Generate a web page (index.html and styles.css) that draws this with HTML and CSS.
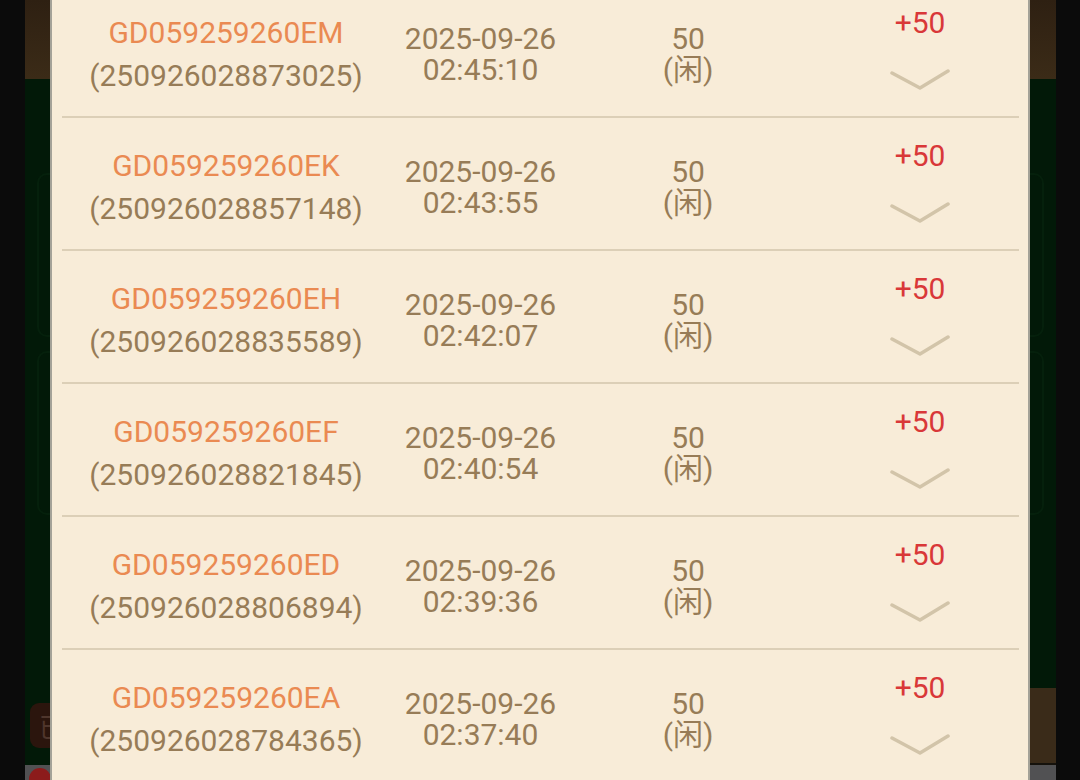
FILE: index.html
```html
<!DOCTYPE html>
<html lang="zh">
<head>
<meta charset="utf-8">
<title>注单记录</title>
<link rel="stylesheet" href="styles.css">
</head>
<body>
<div class="app">
  <header class="topbar"></header>
  <main class="table-area">
    <div class="ghost-card"></div>
    <div class="ghost-card"></div>
  </main>
  <div class="bottom">
    <div class="bottom-left"><span class="badge">已</span></div>
    <div class="bottom-right"></div>
  </div>
  <footer class="navbar"><span class="red-dot"></span></footer>
</div>

<div class="modal">
  <div class="list">
    <div class="row">
      <div class="col-id"><div class="code">GD059259260EM</div><div class="serial">(250926028873025)</div></div>
      <div class="col-time"><div>2025-09-26</div><div>02:45:10</div></div>
      <div class="col-bet"><div>50</div><div>(闲)</div></div>
      <div class="col-win"><div class="win">+50</div><svg class="chev" viewBox="0 0 62 22"><polyline points="3,4 31,19 59,2"/></svg></div>
    </div>
    <div class="row">
      <div class="col-id"><div class="code">GD059259260EK</div><div class="serial">(250926028857148)</div></div>
      <div class="col-time"><div>2025-09-26</div><div>02:43:55</div></div>
      <div class="col-bet"><div>50</div><div>(闲)</div></div>
      <div class="col-win"><div class="win">+50</div><svg class="chev" viewBox="0 0 62 22"><polyline points="3,4 31,19 59,2"/></svg></div>
    </div>
    <div class="row">
      <div class="col-id"><div class="code">GD059259260EH</div><div class="serial">(250926028835589)</div></div>
      <div class="col-time"><div>2025-09-26</div><div>02:42:07</div></div>
      <div class="col-bet"><div>50</div><div>(闲)</div></div>
      <div class="col-win"><div class="win">+50</div><svg class="chev" viewBox="0 0 62 22"><polyline points="3,4 31,19 59,2"/></svg></div>
    </div>
    <div class="row">
      <div class="col-id"><div class="code">GD059259260EF</div><div class="serial">(250926028821845)</div></div>
      <div class="col-time"><div>2025-09-26</div><div>02:40:54</div></div>
      <div class="col-bet"><div>50</div><div>(闲)</div></div>
      <div class="col-win"><div class="win">+50</div><svg class="chev" viewBox="0 0 62 22"><polyline points="3,4 31,19 59,2"/></svg></div>
    </div>
    <div class="row">
      <div class="col-id"><div class="code">GD059259260ED</div><div class="serial">(250926028806894)</div></div>
      <div class="col-time"><div>2025-09-26</div><div>02:39:36</div></div>
      <div class="col-bet"><div>50</div><div>(闲)</div></div>
      <div class="col-win"><div class="win">+50</div><svg class="chev" viewBox="0 0 62 22"><polyline points="3,4 31,19 59,2"/></svg></div>
    </div>
    <div class="row">
      <div class="col-id"><div class="code">GD059259260EA</div><div class="serial">(250926028784365)</div></div>
      <div class="col-time"><div>2025-09-26</div><div>02:37:40</div></div>
      <div class="col-bet"><div>50</div><div>(闲)</div></div>
      <div class="col-win"><div class="win">+50</div><svg class="chev" viewBox="0 0 62 22"><polyline points="3,4 31,19 59,2"/></svg></div>
    </div>
  </div>
</div>
</body>
</html>
```

FILE: styles.css
```css
html, body {
  margin: 0;
  padding: 0;
  height: 780px;
  overflow: hidden;
  background: #0b0b0b;
  font-family: Roboto, "Noto Sans CJK SC", sans-serif;
}

.app {
  width: 1031px;
  margin-left: 25px;
  height: 780px;
  display: flex;
  flex-direction: column;
}

.topbar {
  flex: none;
  height: 79px;
  background: linear-gradient(#2e2012, #3b2b17);
}

.table-area {
  flex: none;
  height: 609px;
  box-sizing: border-box;
  overflow: hidden;
  background: #021908;
  display: flex;
  flex-direction: column;
  gap: 14px;
  padding: 94px 12px 0;
}

.ghost-card {
  flex: none;
  height: 160px;
  border: 2px solid #05200c;
  border-radius: 10px;
}

.bottom {
  flex: none;
  height: 77px;
  display: flex;
}

.bottom-left {
  flex: 1;
  background: #021908;
  padding: 15px 0 0 5px;
}

.badge {
  display: flex;
  align-items: center;
  justify-content: center;
  width: 44px;
  height: 45px;
  border-radius: 9px;
  background: #2b150d;
  color: #4f362c;
  font-size: 26px;
}

.bottom-right {
  flex: 1;
  box-sizing: border-box;
  background: #3a2b19;
  border-bottom: 2px solid #15120c;
}

.navbar {
  flex: 1;
  background: #515153;
  padding-left: 4px;
  overflow: hidden;
}

.red-dot {
  display: block;
  width: 22px;
  height: 22px;
  margin-top: 3px;
  border-radius: 50%;
  background: #8c1b1b;
}

.modal {
  position: fixed;
  left: 50px;
  top: 0;
  width: 976px;
  height: 780px;
  background: #f8ecd8;
  border-left: 2px solid #a4a298;
  border-right: 2px solid #a4a298;
  overflow: hidden;
}

.list {
  margin-top: -15px;
  padding: 0 9px 0 10px;
}

.row {
  height: 131px;
  border-bottom: 2px solid #dccfb7;
  display: grid;
  grid-template-columns: 328px 181px 234px 1fr;
  align-items: start;
  font-size: 30px;
  color: #977c57;
  text-align: center;
}

.col-id {
  padding-top: 26px;
  line-height: 43px;
}

.code {
  color: #ea8a52;
}

.col-time,
.col-bet {
  padding-top: 38px;
  line-height: 31px;
}

.col-win {
  padding: 22px 0 0 16px;
  display: flex;
  flex-direction: column;
  align-items: center;
}

.win {
  color: #d93838;
  line-height: 31px;
}

.chev {
  width: 62px;
  height: 22px;
  margin-top: 31px;
  fill: none;
  stroke: #d2c4a9;
  stroke-width: 3.5;
  stroke-linecap: round;
  stroke-linejoin: round;
}
```
